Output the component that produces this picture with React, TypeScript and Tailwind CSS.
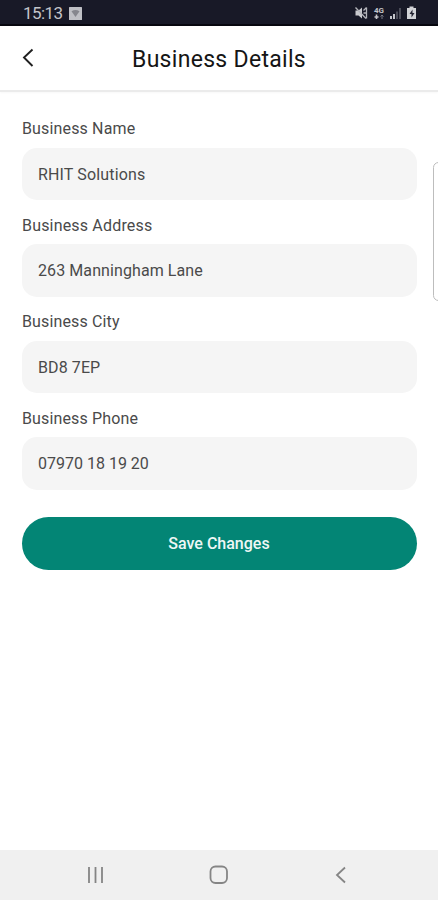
import React from "react";
import clsx from "clsx";

type FieldProps = {
  label: string;
  value: string;
  labelClass: string;
  valueClass: string;
};

const fields: FieldProps[] = [
  {
    label: "Business Name",
    value: "RHIT Solutions",
    labelClass: "tracking-[0.15px]",
    valueClass: "tracking-[0.15px]",
  },
  {
    label: "Business Address",
    value: "263 Manningham Lane",
    labelClass: "tracking-[0.18px]",
    valueClass: "tracking-[0.09px]",
  },
  {
    label: "Business City",
    value: "BD8 7EP",
    labelClass: "tracking-[0.14px]",
    valueClass: "tracking-[0.1px]",
  },
  {
    label: "Business Phone",
    value: "07970 18 19 20",
    labelClass: "tracking-[0.14px]",
    valueClass: "tracking-[0px]",
  },
];

function StatusBar() {
  return (
    <div className="flex h-[25.5px] shrink-0 items-center justify-between border-b-2 border-[#07070f] bg-[#181927] pr-[20px] pl-[23px] text-[#c4c5ca]">
      <div className="flex items-center pt-[3px]">
        <span className="w-[40px] text-[17px] leading-5 tracking-[-0.6px] whitespace-nowrap">15:13</span>
        <svg className="ml-[6px]" width="13" height="13" viewBox="0 0 13 13">
          <rect width="13" height="13" rx="0.5" fill="#bfc0c5" />
          <path d="M2.5 4.2q4-2.6 8 0L6.5 10z" fill="#85868d" />
        </svg>
      </div>
      <div className="flex items-center pt-[3px]">
        <svg width="64" height="16" viewBox="0 0 64 16">
          <path d="M1.5 5.5h3l3.5-3v11l-3.5-3h-3z" fill="#c9cace" />
          <path d="M1.5 2.5l10.5 11M9.5 5.5l3-3M9.5 8h3.5M12.5 2.5v11" stroke="#b5b6bc" strokeWidth="1.3" fill="none" />
          <text x="20" y="8" fontSize="8" fontWeight="700" textLength="10" fill="#c4c5ca">4G</text>
          <path d="M22.5 9.5v4.5M20.5 12h4" stroke="#c4c5ca" strokeWidth="1.6" fill="none" />
          <path d="M28 14V10M26.5 11.5l1.5-1.5 1.5 1.5" stroke="#777883" strokeWidth="1" fill="none" />
          <path d="M36 11h2v3h-2zM39 9h2v5h-2z" fill="#c4c5ca" />
          <path d="M42 6.5h2V14h-2zM45 3h2v11h-2z" fill="#4b4c58" />
          <path d="M55.5 1.5h4v1.5h2.5v11h-9V3h2.5z" fill="#d2d3d7" />
          <path d="M58.5 4.5l-3 4.5h2v3.5l3-4.5h-2z" fill="#222331" />
        </svg>
      </div>
    </div>
  );
}

function Header() {
  return (
    <header className="grid h-[66.5px] shrink-0 grid-cols-[1fr_auto_1fr] items-center border-b-2 border-[#ebebeb] shadow-[0_1px_2px_rgba(0,0,0,0.03)]">
      <button className="w-fit pl-[22px]" aria-label="Back">
        <svg width="14" height="20" viewBox="0 0 14 20" fill="none">
          <path d="M10.5 1.5L2 9.5l8.5 8.5" stroke="#202020" strokeWidth="1.9" />
        </svg>
      </button>
      <h1 className="pt-[5px] text-[23px] leading-7 tracking-[0.3px] whitespace-nowrap text-[#151515]">
        Business Details
      </h1>
    </header>
  );
}

function Field(props: FieldProps) {
  return (
    <div className="h-[96.5px]">
      <div className={clsx("text-[16px] leading-5 text-[#4a4a4a]", props.labelClass)}>
        {props.label}
      </div>
      <div className="mt-[8.5px] flex h-[52.5px] items-center rounded-[15px] bg-[#f5f5f5] px-4 pt-[2px]">
        <span className={clsx("text-[16px] leading-5 text-[#4a4a4a]", props.valueClass)}>
          {props.value}
        </span>
      </div>
    </div>
  );
}

function NavBar() {
  return (
    <nav className="grid h-[50px] shrink-0 grid-cols-[192px_53px_192px] items-center bg-[#f0f0f0] text-[#858585]">
      <svg className="mx-auto" width="18" height="18" viewBox="0 0 18 18">
        <path d="M2 1v16M8.5 1v16M15 1v16" stroke="currentColor" strokeWidth="1.8" />
      </svg>
      <svg className="mx-auto" width="20" height="20" viewBox="0 0 20 20" fill="none">
        <rect x="1.5" y="1.5" width="16.5" height="16.5" rx="5" stroke="currentColor" strokeWidth="1.8" />
      </svg>
      <svg className="mx-auto" width="12" height="18" viewBox="0 0 12 18" fill="none">
        <path d="M10 1.5L2 9l8 7.5" stroke="currentColor" strokeWidth="1.8" />
      </svg>
    </nav>
  );
}

function App() {
  return (
    <div className="relative flex h-[900px] w-[438px] flex-col overflow-hidden bg-white font-['Roboto',sans-serif]">
      <StatusBar />
      <Header />
      <main className="flex-1 pt-[27px] pr-[21px] pl-[22px]">
        {fields.map((field) => (
          <Field key={field.label} {...field} />
        ))}
        <button className="mt-[11.5px] flex h-[53px] w-full items-center justify-center rounded-full bg-[#038575] pt-[2px] pr-[1px] text-[16px] font-medium text-[#eef7f5]">
          Save Changes
        </button>
      </main>
      <NavBar />
      {/* edge panel handle */}
      <div className="absolute top-[162px] -right-[6px] h-[139px] w-[11px] rounded-[6px] border border-[#bdbdbd] bg-white" />
    </div>
  );
}

export default App;
